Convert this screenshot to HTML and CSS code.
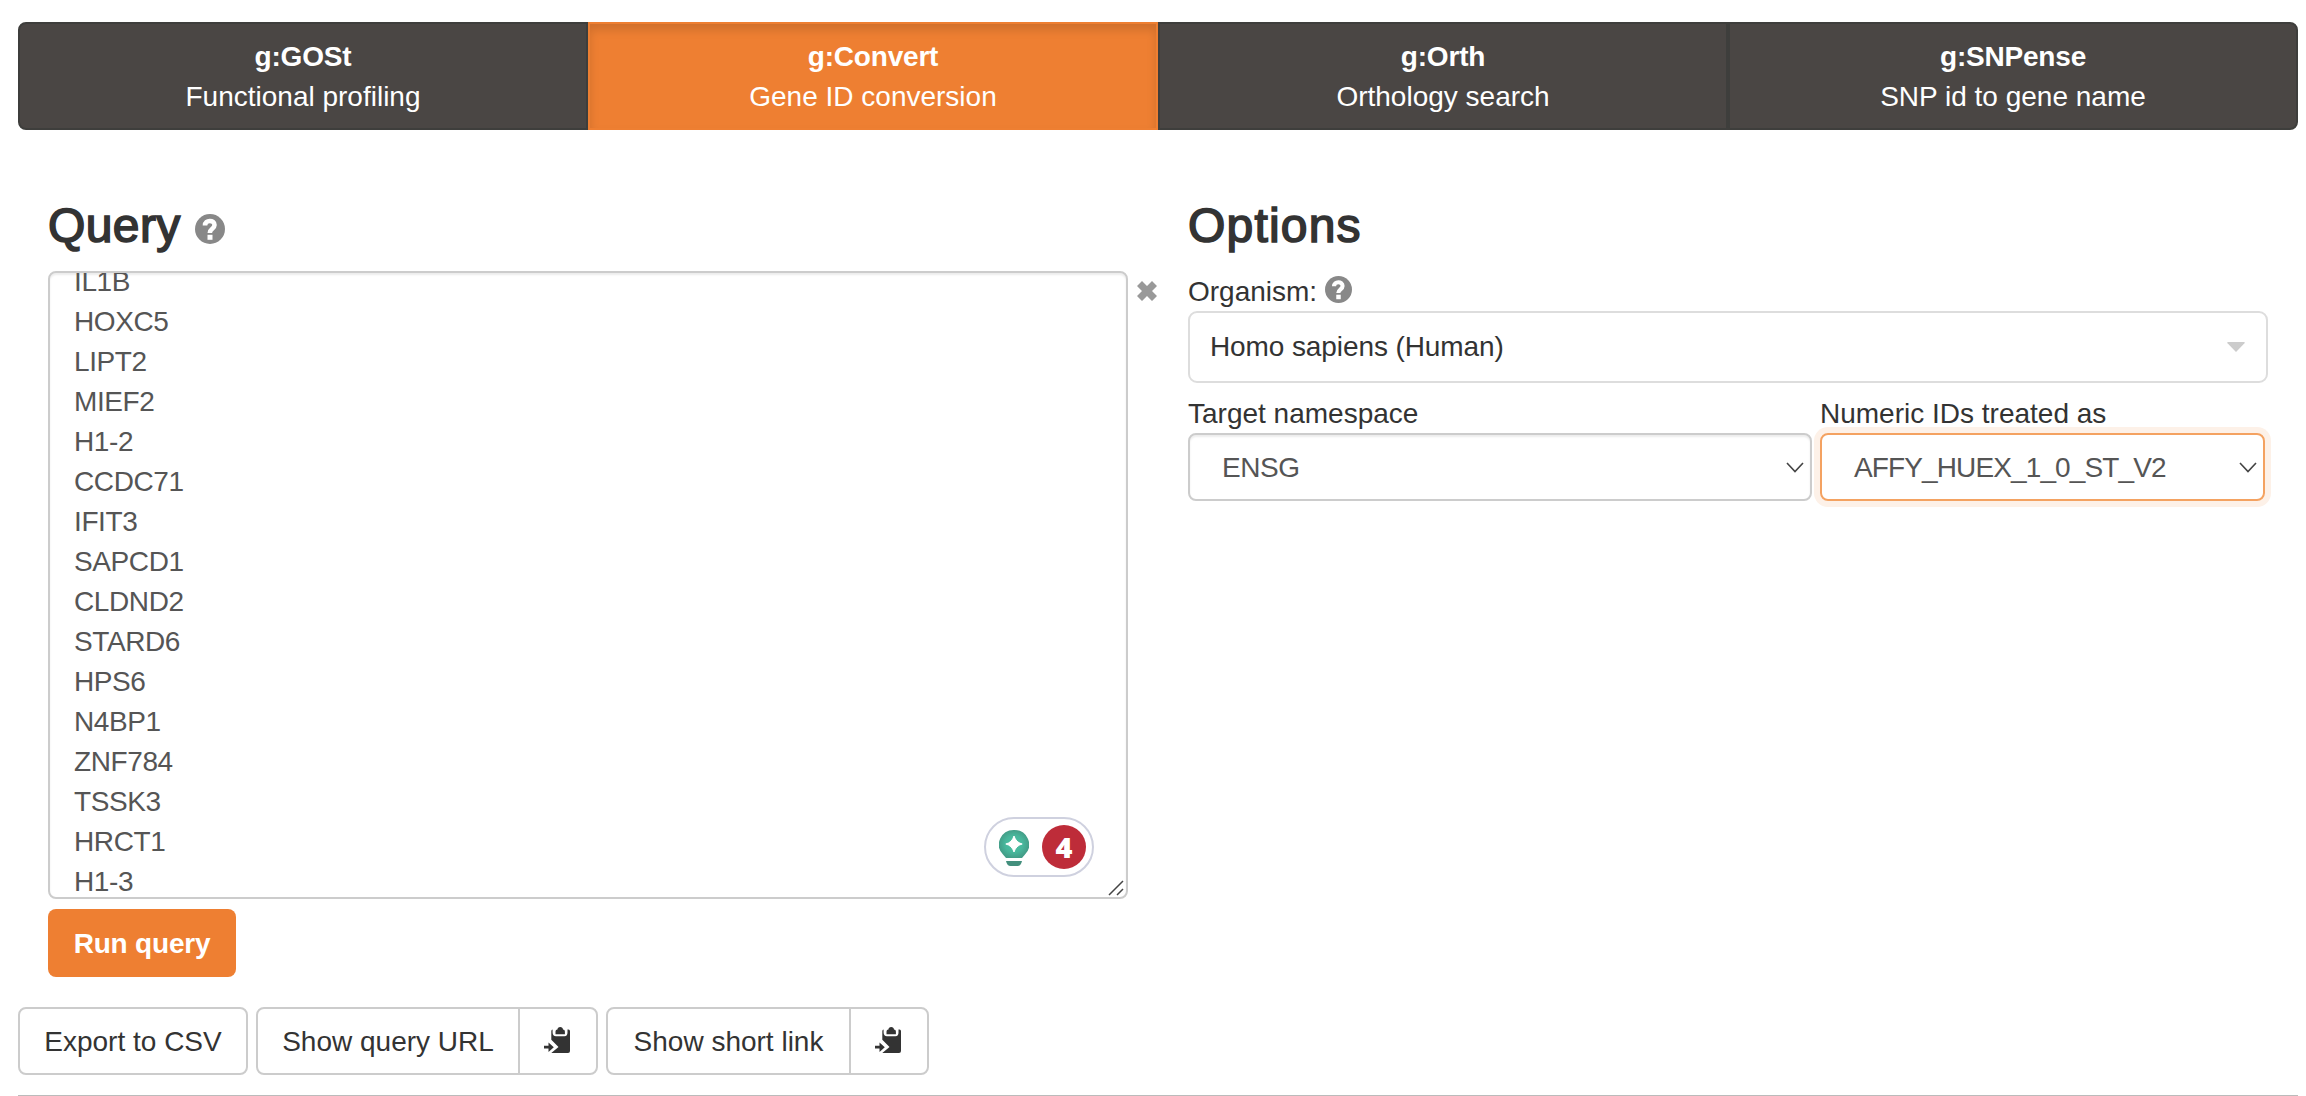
FILE: index.html
```html
<!DOCTYPE html>
<html lang="en">
<head>
<meta charset="utf-8">
<title>g:Convert</title>
<link rel="stylesheet" href="styles.css">
</head>
<body>
<svg class="defs" aria-hidden="true">
  <symbol id="help" viewBox="0 0 30 30">
    <circle cx="15" cy="15" r="15" fill="#888"/>
    <path d="M10 11.500 C10 5.500 19.500 5.500 19.500 11 C19.500 15 14.800 14.500 14.800 19" fill="none" stroke="#fff" stroke-width="4.600"/>
    <path d="M12.500 20.800h5v5h-5z" fill="#fff"/>
  </symbol>
  <symbol id="paste" viewBox="0 0 26 26">
    <path d="M7.300 4.200 Q7.300 2.600 8.600 2.600 V5.500 Q8.600 9.200 12 9.200 H20.500 Q23.500 9.200 23.500 5.500 V2.600 H24.500 Q26 2.600 26 4.200 V24 Q26 26 24 26 H7.300 L14.500 20 L7.300 12.800 Z" fill="#333"/>
    <path d="M11.500 7.300 V4.500 Q11.500 2.600 13.400 2.600 Q13.600 0 16.200 0 Q18.800 0 19 2.600 Q20.900 2.600 20.900 4.500 V7.300 Z" fill="#333"/>
    <path d="M0 18.800 H4.500 V15.500 L9.800 20.200 L4.500 25 V21.500 H0 Z" fill="#333"/>
  </symbol>
</svg>
<nav class="tabs">
  <a class="tab"><b>g:GOSt</b><span>Functional profiling</span></a>
  <a class="tab active"><b>g:Convert</b><span>Gene ID conversion</span></a>
  <a class="tab"><b>g:Orth</b><span>Orthology search</span></a>
  <a class="tab"><b>g:SNPense</b><span>SNP id to gene name</span></a>
</nav>
<main class="columns">
  <section class="query">
    <h3>Query <svg class="help-lg"><use href="#help"/></svg></h3>
    <div class="entry">
      <div class="genes">
        <div class="lines">IL1B
HOXC5
LIPT2
MIEF2
H1-2
CCDC71
IFIT3
SAPCD1
CLDND2
STARD6
HPS6
N4BP1
ZNF784
TSSK3
HRCT1
H1-3</div>
        <div class="badge">
          <svg class="bulb" viewBox="0 0 30 36"><defs><radialGradient id="g"><stop offset="0" stop-color="#4cc3a5"/><stop offset=".6" stop-color="#48b69b"/><stop offset="1" stop-color="#439e88"/></radialGradient></defs><path d="M15 0a15 14.500 0 0 1 11 24.500L23 28H7l-3-3.500A15 14.500 0 0 1 15 0Z" fill="url(#g)"/><path d="M15 6q2 6.500 8.200 8q-6.200 1.500-8.200 8q-2-6.500-8.200-8q6.200-1.500 8.200-8Z" fill="#fff" stroke="#fff" stroke-linejoin="round"/><path d="M7 31h16q-1 5-4.500 5h-7Q8 36 7 31Z" fill="#438f7d"/></svg>
          <span class="count">4</span>
        </div>
        <svg class="grip" viewBox="0 0 16 16"><path d="M1 15 15 1M9 15l6-6" stroke="#444" stroke-width="1.500"/></svg>
      </div>
      <svg class="clear" viewBox="0 0 20 20"><path d="M5 0 10 5 15 0 20 5 15 10 20 15 15 20 10 15 5 20 0 15 5 10 0 5Z" fill="#999"/></svg>
    </div>
    <button class="run">Run query</button>
  </section>
  <section class="options">
    <h3 class="wide">Options</h3>
    <div class="label first">Organism: <svg class="help-sm"><use href="#help"/></svg></div>
    <div class="organism">Homo sapiens (Human)<svg class="caret" viewBox="0 0 18 10"><path d="M1 0h16q1.500 0 .5 1.200L9 10 .5 1.200Q-.5 0 1 0Z" fill="#ccc"/></svg></div>
    <div class="pair">
      <div class="target"><div class="label">Target namespace</div>
        <div class="select">ENSG<svg class="chev" viewBox="0 0 18 11"><path d="m1 1 8 8.500L17 1" fill="none" stroke="#444" stroke-width="1.600"/></svg></div></div>
      <div class="numeric"><div class="label">Numeric IDs treated as</div>
        <div class="select focus">AFFY_HUEX_1_0_ST_V2<svg class="chev" viewBox="0 0 18 11"><path d="m1 1 8 8.500L17 1" fill="none" stroke="#444" stroke-width="1.600"/></svg></div></div>
    </div>
  </section>
</main>
<div class="actions">
  <button class="btn export">Export to CSV</button>
  <div class="group"><button class="btn url">Show query URL</button><button class="btn icon"><svg class="paste"><use href="#paste"/></svg></button></div>
  <div class="group"><button class="btn link">Show short link</button><button class="btn icon"><svg class="paste"><use href="#paste"/></svg></button></div>
</div>
<hr>
</body>
</html>
```
FILE: styles.css
```css
* { box-sizing: border-box; }
body {
  margin: 0;
  padding: 22px 8px 0 18px;
  height: 1096px;
  overflow: hidden;
  background: #fff;
  color: #333;
  font: 28px/40px "Liberation Sans", Arial, sans-serif;
}
svg { display: block; flex: none; }
.defs { position: absolute; width: 0; height: 0; }
.tabs { display: flex; height: 108px; }
.tab {
  flex: 1;
  padding: 13px 0 11px;
  border: 2px solid #3e3e3c;
  background: #4a4644;
  color: #fff;
  text-align: center;
}
.tab b, .tab span { display: block; }
.tab b { letter-spacing: -.2px; }
.tab:first-child { border-radius: 8px 0 0 8px; }
.tab:last-child { border-radius: 0 8px 8px 0; }
.tab.active {
  background: #ee7f32;
  border-color: #ee7f32;
  box-shadow: inset 0 6px 10px rgba(0, 0, 0, .125);
}
.columns { display: flex; padding: 66px 30px 0; height: 877px; }
.query { width: 1140px; }
.options { width: 1080px; }
h3 {
  display: flex;
  align-items: center;
  gap: 14px;
  margin: 0;
  height: 60px;
  font-size: 48px;
  font-weight: 400;
  line-height: 60px;
  letter-spacing: .4px;
  -webkit-text-stroke: 1.6px #333;
}
h3.wide { letter-spacing: 1.2px; }
.help-lg { width: 30px; height: 30px; margin-top: 5px; -webkit-text-stroke: 0; }
.help-sm { width: 27px; height: 27px; margin-bottom: 4px; }
.entry { display: flex; align-items: flex-start; gap: 9px; margin-top: 15px; }
.genes {
  position: relative;
  width: 1080px;
  height: 628px;
  overflow: hidden;
  padding-left: 24px;
  border: 2px solid #ccc;
  border-radius: 8px;
  box-shadow: inset 0 2px 2px rgba(0, 0, 0, .075);
  color: #555;
}
.lines { margin-top: -11px; letter-spacing: -.4px; white-space: pre; }
.badge {
  position: absolute;
  right: 32px;
  bottom: 20px;
  display: flex;
  align-items: center;
  gap: 13px;
  width: 110px;
  height: 60px;
  padding-left: 13px;
  border: 2px solid #cfd1df;
  border-radius: 30px;
  background: #fff;
}
.bulb { width: 30px; height: 36px; margin-top: 2px; }
.count {
  width: 44px;
  height: 44px;
  border-radius: 50%;
  background: #be2c39;
  color: #fff;
  font: 800 29px/44px "Open Sans", sans-serif;
  text-align: center;
}
.grip { position: absolute; right: 2px; bottom: 1px; width: 16px; height: 16px; }
.clear { width: 20px; height: 20px; margin-top: 10px; }
button { font: inherit; color: inherit; margin: 0; padding: 2px 0 0; background: #fff; }
.run {
  display: block;
  width: 188px;
  height: 68px;
  margin-top: 10px;
  border: 0;
  border-radius: 8px;
  background: #ee7f32;
  color: #fff;
  font-weight: 700;
  letter-spacing: -.2px;
}
.label { display: flex; align-items: center; gap: 8px; height: 40px; padding-top: 1px; }
.label.first { margin-top: 15px; }
.organism {
  display: flex;
  align-items: center;
  justify-content: space-between;
  height: 72px;
  padding: 0 21px 0 20px;
  border: 2px solid #ddd;
  border-radius: 9px;
  letter-spacing: -.1px;
}
.caret { width: 18px; height: 10px; }
.pair { display: flex; gap: 8px; margin-top: 10px; }
.target { width: 624px; }
.numeric { width: 445px; }
.select {
  display: flex;
  align-items: center;
  justify-content: space-between;
  height: 68px;
  padding: 1px 6px 0 32px;
  border: 2px solid #ccc;
  border-radius: 8px;
  box-shadow: inset 0 2px 2px rgba(0, 0, 0, .075);
  color: #555;
  letter-spacing: -.4px;
}
.select.focus {
  border-color: #f4a261;
  box-shadow: 0 0 0 6px #fdf1e8;
  letter-spacing: -.88px;
}
.chev { width: 18px; height: 11px; }
.actions { display: flex; gap: 8px; height: 68px; }
.group { display: flex; }
.btn { height: 68px; border: 2px solid #ccc; border-radius: 8px; }
.export { width: 230px; }
.url { width: 264px; border-radius: 8px 0 0 8px; }
.link { width: 245px; border-radius: 8px 0 0 8px; }
.icon {
  display: flex;
  align-items: center;
  justify-content: center;
  width: 80px;
  margin-left: -2px;
  padding: 0 2px 2px 0;
  border-radius: 0 8px 8px 0;
}
.paste { width: 26px; height: 26px; }
hr { margin: 20px 0 0; border: 0; border-top: 1px solid #bbb; }
```
